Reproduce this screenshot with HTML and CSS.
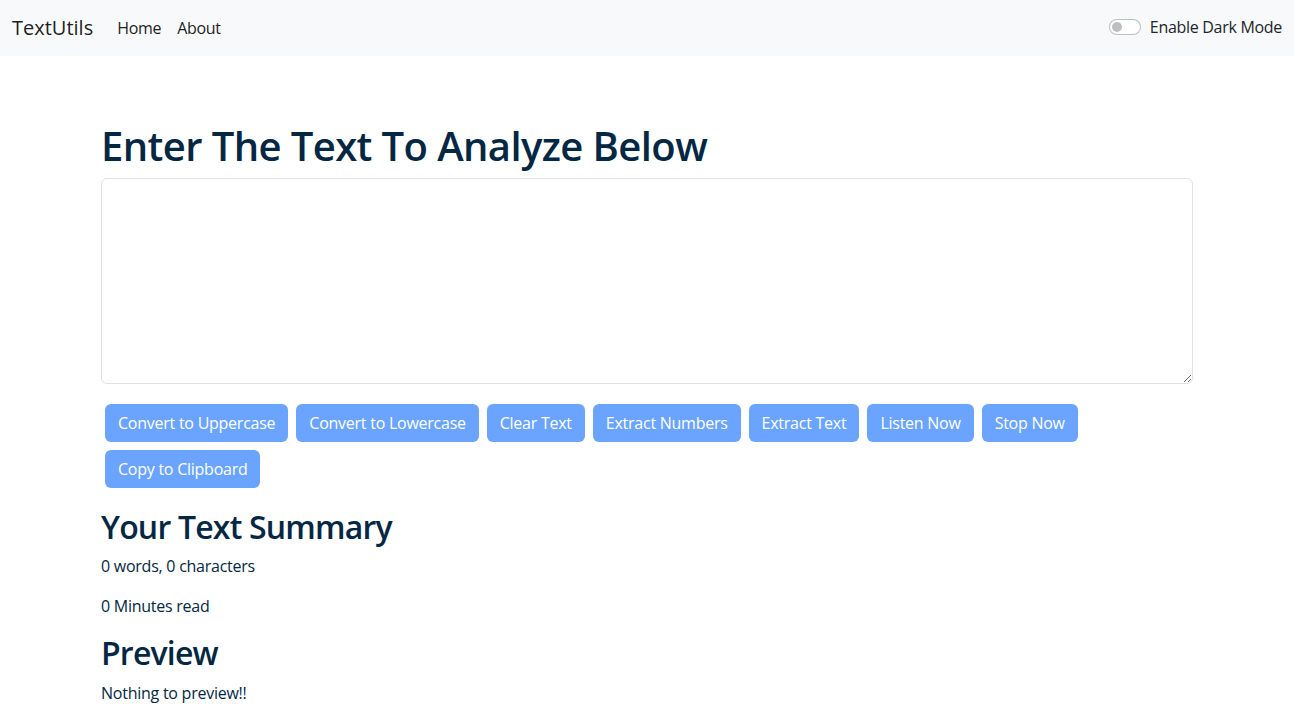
FILE: index.html
```html
<!DOCTYPE html>
<html lang="en">
<head>
<meta charset="utf-8">
<title>TextUtils</title>
<link rel="stylesheet" href="styles.css">
</head>
<body>
<nav class="navbar">
  <div class="nav-left">
    <a class="brand" href="#">TextUtils</a>
    <a class="nav-link" href="#">Home</a>
    <a class="nav-link" href="#">About</a>
  </div>
  <label class="switch">
    <input type="checkbox" class="switch-input">
    <span class="switch-track"><span class="switch-knob"></span></span>
    <span class="switch-label">Enable Dark Mode</span>
  </label>
</nav>
<main class="container">
  <section class="editor">
    <h1 class="title">Enter The Text To Analyze Below</h1>
    <textarea class="textbox" rows="8"></textarea>
    <div class="buttons">
      <button class="btn">Convert to Uppercase</button>
      <button class="btn">Convert to Lowercase</button>
      <button class="btn">Clear Text</button>
      <button class="btn">Extract Numbers</button>
      <button class="btn">Extract Text</button>
      <button class="btn">Listen Now</button>
      <button class="btn">Stop Now</button>
      <button class="btn">Copy to Clipboard</button>
    </div>
  </section>
  <section class="summary">
    <h2 class="subtitle">Your Text Summary</h2>
    <p class="para">0 words, 0 characters</p>
    <p class="para">0 Minutes read</p>
    <h2 class="subtitle">Preview</h2>
    <p class="para">Nothing to preview!!</p>
  </section>
</main>
</body>
</html>
```

FILE: styles.css
```css
* { box-sizing: border-box; }
html, body {
  margin: 0;
  padding: 0;
  background: #ffffff;
  font-family: "Open Sans", "Noto Sans", sans-serif;
  font-size: 16px;
  line-height: 1.5;
  color: #212529;
}
.navbar {
  height: 56px;
  background: #f8f9fa;
  display: flex;
  align-items: center;
  justify-content: space-between;
  padding: 0 12px;
}
.nav-left {
  display: flex;
  align-items: center;
}
.brand {
  font-size: 20px;
  color: rgba(0,0,0,0.9);
  text-decoration: none;
  margin-right: 16px;
  letter-spacing: 0;
}
.nav-link {
  padding: 8px;
  color: rgba(0,0,0,0.9);
  text-decoration: none;
  letter-spacing: -0.3px;
}
.nav-link:first-of-type {
  margin-left: -1px;
}
.switch {
  display: flex;
  align-items: center;
  gap: 9px;
  margin-top: -2px;
}
.switch-input { display: none; }
.switch-track {
  width: 32px;
  height: 16px;
  border: 1px solid rgba(0,0,0,0.25);
  border-radius: 8px;
  background: #fff;
  display: flex;
  align-items: center;
  padding-left: 2px;
}
.switch-knob {
  width: 10px;
  height: 10px;
  border-radius: 50%;
  background: rgba(0,0,0,0.25);
}
.switch-label {
  color: #212529;
  letter-spacing: -0.3px;
}
.container {
  max-width: 1092px;
  margin: 0 auto;
  padding-top: 66px;
  color: #042743;
}
.title {
  font-size: 40px;
  font-weight: 600;
  line-height: 1.2;
  margin: 0 0 8px;
  letter-spacing: -0.6px;
}
.textbox {
  display: block;
  width: 100%;
  height: 206px;
  padding: 6px 12px;
  border: 1px solid #dee2e6;
  border-radius: 6px;
  font: inherit;
  color: #212529;
  margin-bottom: 16px;
}
.buttons {
  display: flex;
  flex-wrap: wrap;
}
.btn {
  margin: 4px;
  padding: 6px 12px;
  border: 1px solid transparent;
  border-radius: 6px;
  background: #6aa4fe;
  color: #fff;
  font-family: inherit;
  font-size: 16px;
  line-height: 24px;
  letter-spacing: -0.25px;
}
.summary {
  padding-top: 16px;
}
.subtitle {
  font-size: 32px;
  font-weight: 600;
  line-height: 1.2;
  margin: 0 0 8px;
  letter-spacing: -0.8px;
}
.para {
  margin: 0 0 16px;
  letter-spacing: -0.25px;
}
```
